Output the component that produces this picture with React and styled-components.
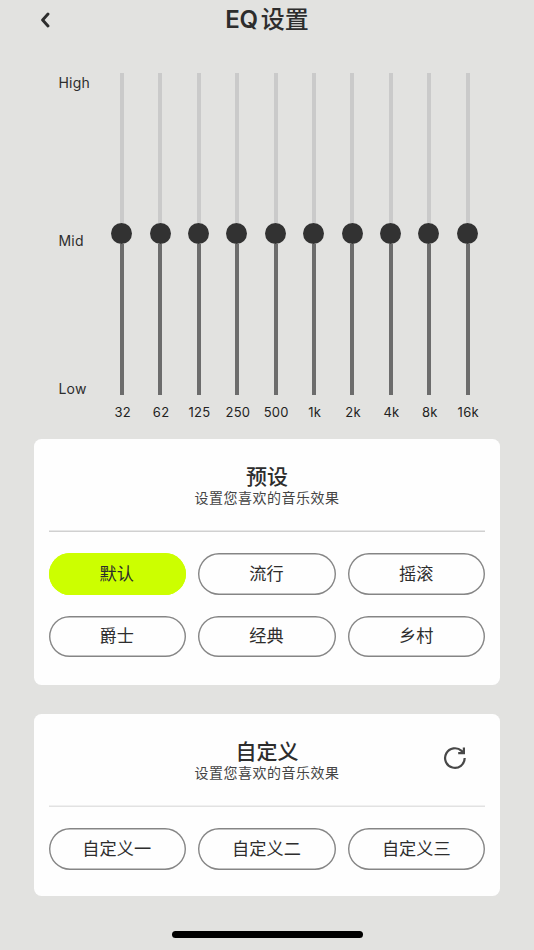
import { useState } from "react";
import styled, { createGlobalStyle } from "styled-components";

const GlobalStyle = createGlobalStyle`
  *, *::before, *::after {
    box-sizing: border-box;
  }
  body {
    margin: 0;
    background: #e2e2e0;
    font-family: Inter, "Noto Sans CJK SC", sans-serif;
    color: #2d2d2d;
  }
  button {
    font: inherit;
    color: inherit;
    cursor: pointer;
  }
`;

const Screen = styled.main`
  display: flex;
  flex-direction: column;
  align-items: center;
  width: 534px;
  height: 950px;
  overflow: hidden;
`;

const Header = styled.header`
  display: grid;
  grid-template-columns: 60px 1fr 60px;
  align-items: center;
  width: 100%;
  height: 40px;
`;

const IconButton = styled.button`
  display: flex;
  align-items: center;
  justify-content: center;
  padding: 0;
  border: 0;
  background: none;
`;

const BackButton = styled(IconButton)`
  width: 10px;
  height: 16px;
  margin: 0 0 1px 40px;
`;

const ScreenTitle = styled.h1`
  display: flex;
  justify-content: center;
  gap: 3px;
  margin: 0;
  font-size: 24px;
  font-weight: 500;
  line-height: 40px;
`;

const Latin = styled.span`
  font-weight: 600;
  font-size: 24px;
  letter-spacing: -0.3px;
`;

const Equalizer = styled.section`
  display: flex;
  width: 100%;
  height: 399px;
  padding: 33px 0 0 58.5px;
`;

const Scale = styled.div`
  display: flex;
  flex-direction: column;
  justify-content: space-between;
  width: 44px;
  height: 326px;
  font-size: 14px;
  line-height: 20px;
  letter-spacing: 0.2px;
`;

const ScaleLabel = styled.span`
  &:nth-child(2) {
    margin-top: 10px;
  }
`;

const Bands = styled.div`
  display: grid;
  grid-template-columns: repeat(10, 38.4px);
`;

const Band = styled.div`
  display: flex;
  flex-direction: column;
  align-items: center;
`;

const Track = styled.div`
  display: flex;
  flex-direction: column;
  align-items: center;
  width: 21px;
  height: 322px;
`;

const Rail = styled.div`
  flex: ${(props) => props.$share} 1 0;
  width: 4px;
  margin-left: 0.6px;
  background: ${(props) => (props.$filled ? "#6c6c6c" : "#cacaca")};
`;

const Knob = styled.div`
  width: 21px;
  height: 21px;
  border-radius: 50%;
  background: #323232;
`;

const BandLabel = styled.span`
  margin: 8px 0 0 2px;
  font-size: 13px;
  line-height: 18px;
  letter-spacing: 0.25px;
  color: #222;
`;

const Card = styled.section`
  width: 465.5px;
  height: ${(props) => props.$height}px;
  margin-bottom: 29.5px;
  padding: 0 14.3px;
  border-radius: 7.5px;
  background: #fefefe;
`;

const CardHeader = styled.div`
  display: grid;
  grid-template-columns: 60px 1fr 60px;
  align-items: center;
  height: 92.5px;
  box-shadow: inset 0 -1.5px ${(props) => props.$line};
`;

const Heading = styled.div`
  grid-column: 2;
  display: flex;
  flex-direction: column;
  align-items: center;
`;

const CardTitle = styled.h2`
  margin: 0;
  font-size: 21px;
  font-weight: 500;
  line-height: 24px;
`;

const Subtitle = styled.p`
  margin: 0;
  font-size: 14px;
  line-height: 17px;
  letter-spacing: 0.5px;
  color: #444;
`;

const ResetButton = styled(IconButton)`
  width: 24px;
  height: 24px;
  margin: 0 0 4px 18px;
`;

const PresetGrid = styled.div`
  display: grid;
  grid-template-columns: repeat(3, 1fr);
  gap: 21px 12.4px;
  padding-top: 21.5px;
`;

const Pill = styled.button`
  height: 41.5px;
  padding: 0 1px 0 0;
  border: 0;
  border-radius: 21px;
  background: ${(props) => (props.$active ? "#ccff00" : "transparent")};
  box-shadow: inset 0 0 0 1.4px
    ${(props) => (props.$active ? "#ccff00" : "#858585")};
  font-size: 17.2px;
  line-height: 24px;
`;

const HomeIndicator = styled.div`
  width: 191px;
  height: 7px;
  margin-top: 5.5px;
  border-radius: 4px;
  background: #000;
`;

const bands = ["32", "62", "125", "250", "500", "1k", "2k", "4k", "8k", "16k"];
const presets = ["默认", "流行", "摇滚", "爵士", "经典", "乡村"];
const customs = ["自定义一", "自定义二", "自定义三"];

function BackIcon() {
  return (
    <svg width="10" height="16" viewBox="0 0 10 16" fill="none">
      <path
        d="M8 2L2.6 8L8 14"
        stroke="#2d2d2d"
        strokeWidth="2.9"
        strokeLinecap="round"
        strokeLinejoin="round"
      />
    </svg>
  );
}

function ResetIcon() {
  return (
    <svg width="24" height="24" viewBox="0 0 24 24" fill="none">
      <path
        d="M21.7 12A9.8 9.8 0 1 1 18.6 4.9L20.6 6.8"
        stroke="#484848"
        strokeWidth="2.2"
      />
      <path d="M20.9 1.6V7.2H15.2" stroke="#484848" strokeWidth="2.2" />
    </svg>
  );
}

export default function App() {
  const [selected, setSelected] = useState("默认");

  const renderPill = (name) => (
    <Pill
      key={name}
      $active={selected === name}
      onClick={() => setSelected(name)}
    >
      {name}
    </Pill>
  );

  return (
    <>
      <GlobalStyle />
      <Screen>
        <Header>
          <BackButton aria-label="返回">
            <BackIcon />
          </BackButton>
          <ScreenTitle>
            <Latin>EQ</Latin>
            <span>设置</span>
          </ScreenTitle>
        </Header>

        <Equalizer>
          <Scale>
            <ScaleLabel>High</ScaleLabel>
            <ScaleLabel>Mid</ScaleLabel>
            <ScaleLabel>Low</ScaleLabel>
          </Scale>
          <Bands>
            {bands.map((band) => (
              <Band key={band}>
                <Track>
                  <Rail $share={150} />
                  <Knob />
                  <Rail $share={151} $filled />
                </Track>
                <BandLabel>{band}</BandLabel>
              </Band>
            ))}
          </Bands>
        </Equalizer>

        <Card $height={245.5}>
          <CardHeader $line="#d0d0d0">
            <Heading>
              <CardTitle>预设</CardTitle>
              <Subtitle>设置您喜欢的音乐效果</Subtitle>
            </Heading>
          </CardHeader>
          <PresetGrid>{presets.map(renderPill)}</PresetGrid>
        </Card>

        <Card $height={182}>
          <CardHeader $line="#e2e2e2">
            <Heading>
              <CardTitle>自定义</CardTitle>
              <Subtitle>设置您喜欢的音乐效果</Subtitle>
            </Heading>
            <ResetButton aria-label="重置">
              <ResetIcon />
            </ResetButton>
          </CardHeader>
          <PresetGrid>{customs.map(renderPill)}</PresetGrid>
        </Card>

        <HomeIndicator />
      </Screen>
    </>
  );
}
